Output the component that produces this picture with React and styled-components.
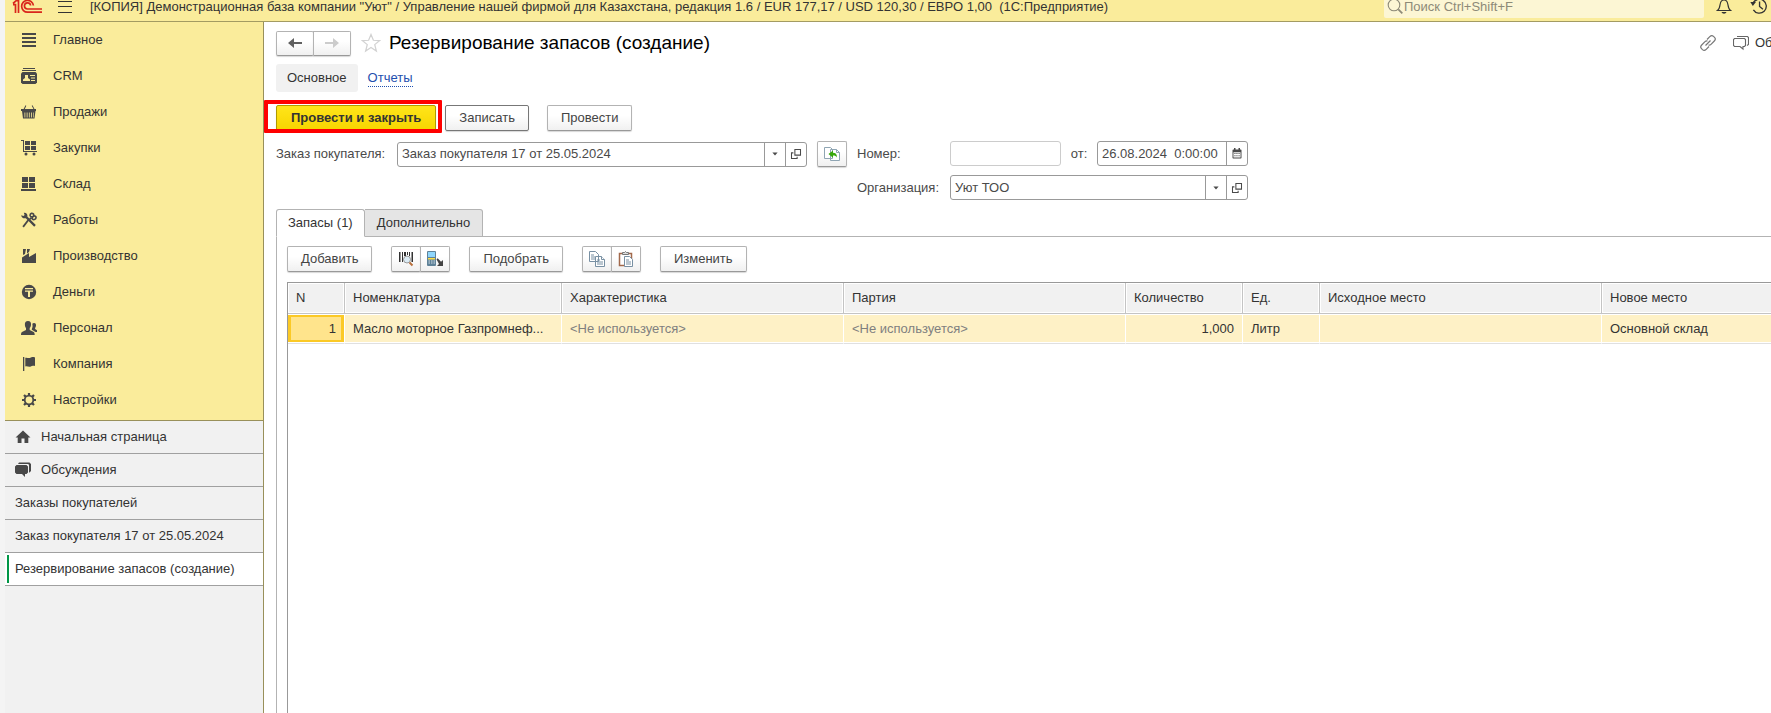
import React from 'react'
import styled, { createGlobalStyle, css } from 'styled-components'

const GlobalStyle = createGlobalStyle`
  * {
    box-sizing: border-box;
  }

  body {
    margin: 0;
    background: #fff;
    color: #333;
    font: 13px/16px "Liberation Sans", Arial, sans-serif;
  }

  button, input {
    font: inherit;
    color: inherit;
  }

  svg {
    display: block;
    flex: none;
  }
`

// icons

const Icon = ({ size = 16, children, ...rest }) => (
  <svg width={size} height={size} viewBox="0 0 16 16" fill="currentColor" aria-hidden="true" {...rest}>
    {children}
  </svg>
)

const LogoIcon = () => (
  <svg width="30" height="14" viewBox="0 0 30 14" fill="none" stroke="#d9261c" strokeWidth="1.7" aria-hidden="true">
    <path d="M1 3.500 4.200.7H6.500V13M1 4.700H3.500V13" />
    <path d="M21.400 5.500A5.900 5.900 0 1 0 15.500 12.200H30" />
    <path d="M18.600 5.500A3.100 3.100 0 1 0 15.500 9H30" />
  </svg>
)

const BurgerIcon = () => (
  <Icon><path d="M1 2h14v1H1zM1 7h14v1H1zM1 13h14v1H1z" /></Icon>
)

const MainIcon = () => (
  <Icon><path d="M1 1h14v2H1zM1 5h14v2H1zM1 9h14v2H1zM1 13h14v2H1z" /></Icon>
)

const CrmIcon = () => (
  <Icon>
    <path d="M2 0h12v1H2zM1 2h14v1H1z" />
    <path d="M1.500 4h13L16 5.500v9L14.500 16h-13L0 14.500v-9z" />
    <path fill="#faec9b" d="M4 7h3v3l2 1.500V13H2v-1.500L4 10zM9 7h5v1H9zM10 9.500h4v1h-4zM10 12h4v1h-4z" />
  </Icon>
)

const BasketIcon = () => (
  <Icon>
    <path d="M4.500 1.200 5.300 1.800 3.800 5H12.500L10.700 1.800 11.500 1.200 13.500 5H15V7H0V5H2.600z" />
    <path fillRule="evenodd" d="M1 7h13.500l-1 7.500h-11.500zM3.500 8.500v5h.8v-5zM5.700 8.500v5h.8v-5zM7.900 8.500v5h.8v-5zM10.100 8.500v5h.8v-5zM12 8.500v5h.6v-5z" />
  </Icon>
)

const CartIcon = () => (
  <Icon>
    <path d="M0 0h3v11h13v1H2V1H0zM4 1h5v4H4zM10 1h5v4h-5zM4 6h5v4H4zM10 6h5v4h-5z" />
    <circle cx="5" cy="14" r="1.500" />
    <circle cx="13" cy="14" r="1.500" />
  </Icon>
)

const StockIcon = () => (
  <Icon><path d="M1 1h6v5H1zM8 1h6v5H8zM1 7h6v5H1zM8 7h6v5H8zM0 13h15v2H0z" /></Icon>
)

const ToolsIcon = () => (
  <Icon>
    <path d="M.2 3.200 2.500 4 3.600 3 2.800.8C5.500.5 7 2.500 6.300 4.600L14.800 13l-1.600 1.700L4.800 6.200C2.500 6.800.3 5.500.2 3.200z" />
    <path d="M8.800 7.600 2.800 15.500 1.400 14.300 7.400 6.500z" />
    <path fill="none" stroke="currentColor" strokeWidth="1.600" d="M8.600 7.600 10 5.800M10.500 1.200c2 0 2.500 1.200 2 2.600-.6 1.400-2.700 1.500-3.200.2-.4-1.200.2-2.400 1.200-2.800zM12.500 4.200c1.500-.6 2.700.1 2.500 1.600-.2 1.300-2 2.400-3.300 1.500-1-.8-.5-2.500.8-3.100z" />
  </Icon>
)

const FactoryIcon = () => (
  <Icon><path d="M2 1h3L4 6 2 7zM6 1h3L8 4 6 5.500zM1 9.500 8 5v4l7-4v10H1z" /></Icon>
)

const MoneyIcon = () => (
  <Icon>
    <circle cx="8" cy="8" r="7.200" />
    <path fill="#faec9b" d="M4 4h8v1.200H4zM4 6.400h8v1.400H9V13H7V7.800H4z" />
  </Icon>
)

const PeopleIcon = () => (
  <Icon>
    <path d="M7 1c2.300 0 3.300 1.500 3 4-.2 1.500-.8 2.500-1.300 3v2l4 2c.8.500 1 1.500 1 3H0c0-1.500.2-2.500 1-3l4-2V8C4.400 7.400 4 6.500 3.900 5 3.700 2.500 4.700 1 7 1z" />
    <path d="M11.300 3.800c.5-.6 1-.8 1.700-.8 1.700 0 2.200 1.200 2 2.800-.1 1-.5 1.700-.9 2.100V9l1.900 1.200V12h-1.500L10.800 9.800V9c.8-1.400 1-3 .5-5.200z" />
  </Icon>
)

const FlagIcon = () => (
  <Icon><path d="M2 1h1.300v14H2zM4.300 1.800c1.700-.6 3 .7 4.700.2C10.500 1.500 11.500.6 14 1.500V10c-2-.6-3 .2-4.700.7-1.800.4-3-.7-5-.2z" /></Icon>
)

const GearIcon = () => (
  <Icon fill="none" stroke="currentColor">
    <circle cx="8" cy="8" r="4.300" strokeWidth="1.800" />
    <path strokeWidth="2.200" d="M8 1v2.500M8 12.500V15M1 8h2.500M12.500 8H15M3 3l1.900 1.900M11.100 11.100 13 13M13 3l-1.900 1.900M4.900 11.100 3 13" />
  </Icon>
)

const HomeIcon = () => (
  <Icon><path d="M8 1.500 15.500 8.500H13.300V14H9.500V9.500h-3V14H2.700V8.500H.5z" /></Icon>
)

const TalkIcon = () => (
  <Icon>
    <path d="M4 .5h10.500L16 2v7l-1.500 1.500H14V2.800L13 2H3z" />
    <path d="M1.500 3H11.500L13 4.500v6L11.500 12H10v3L7 12H1.500L0 10.500v-6z" />
  </Icon>
)

const BellIcon = () => (
  <Icon>
    <path fill="none" stroke="currentColor" strokeWidth="1.200" d="M8 0v1M1.500 11.500c2-1.500 2.200-3 2.600-6C4.500 2.500 5.700 1 8 1s3.500 1.500 3.900 4.500c.4 3 .6 4.500 2.600 6z" />
    <path d="M5.500 13h5c-.5 1.300-1.300 1.700-2.500 1.700S6 14.300 5.500 13z" />
  </Icon>
)

const HistoryIcon = () => (
  <Icon size={18}>
    <path fill="none" stroke="currentColor" strokeWidth="1.200" d="M2.500 5A6.200 6.200 0 1 1 3 10.500M8.500 3v4.500l3 2.500" />
    <path d="M.3 3.500h5L2.500 7z" />
  </Icon>
)

const SearchIcon = () => (
  <Icon fill="none" stroke="currentColor">
    <circle cx="7" cy="6" r="5.800" strokeWidth="1.100" />
    <path strokeWidth="1.800" d="m11.300 10.300 4 4" />
  </Icon>
)

const ArrowIcon = ({ flip }) => (
  <Icon transform={flip ? 'scale(-1 1)' : undefined}>
    <path d="M1 8 7 3v4h8v2H7v4z" />
  </Icon>
)

const StarIcon = () => (
  <Icon size={20} fill="none" stroke="#d2d2d2">
    <path d="m8 1.200 1.900 4.600 4.900.3-3.800 3.200 1.300 5.100L8 11.600l-4.300 2.800L5 9.300 1.200 6.100l4.900-.3z" />
  </Icon>
)

const LinkIcon = () => (
  <Icon fill="none" stroke="#777" strokeWidth="1.200">
    <path d="M7 4.500 9.800 1.700c1.200-1.200 2.700-1.200 3.700-.3l1 1c1 1 .9 2.500-.2 3.600L11 9.300c-.8.8-1.700.9-2.500.7M9 11.500l-2.800 2.800c-1.200 1.200-2.700 1.200-3.700.3l-1-1c-1-1-.9-2.500.2-3.600L5 6.700c.8-.8 1.700-.9 2.500-.7M5.500 10.500l5-5" />
  </Icon>
)

const CommentIcon = () => (
  <Icon fill="none" stroke="#666" strokeWidth="1.100">
    <path d="M4 1.500h10.500l1 1v7l-1.500 1" />
    <path d="M1.500 3.500h10l1 1v6l-1 1H10V14l-3-2.500H1.500l-1-1v-6z" />
  </Icon>
)

const CaretIcon = () => (
  <Icon size={12}><path d="M4.500 6h7L8 10z" /></Icon>
)

const OpenIcon = () => (
  <Icon size={12} fill="none" stroke="currentColor" strokeWidth="1.400">
    <path d="M6.500 2h7.500v7.500H6.500zM4.500 6.500H2V14h7.500v-2.500" />
  </Icon>
)

const CalendarIcon = () => (
  <Icon size={12}>
    <path fillRule="evenodd" d="M3 2h1V0h2v2h4V0h2v2h1a1 1 0 0 1 1 1v10a1 1 0 0 1-1 1H3a1 1 0 0 1-1-1V3a1 1 0 0 1 1-1zm.300 3.500v7.200h9.400V5.500zM4.500 6.500h1.500V8H4.500zM7.200 6.500h1.500V8H7.200zM10 6.500h1.500V8H10zM4.500 9.500h1.500v1.500H4.500zM7.200 9.500h1.500v1.500H7.200zM10 9.500h1.500v1.500H10z" />
  </Icon>
)

const FillIcon = () => (
  <Icon fill="#fff" stroke="#8fa5b3">
    <path d="M.5 1.500h6l2 2v9h-8zM6.500 3.500h6l3 3v8h-9z" />
    <path fill="none" d="M12.500 3.500v3h3" />
    <path fill="#38a80c" stroke="none" d="M4.500 8 9 4.500v2.300c2.500 0 4 1.400 4 4.700-1-1.500-2-2-4-2v2.200z" />
  </Icon>
)

const BarcodeIcon = () => (
  <Icon>
    <path d="M1 1h1.500v10H1zM4 1h1v10H4zM6 1h2v4H6zM9 1h1v3H9zM11 1h1v4h-1zM13.500 1H15v10h-1.500z" />
    <circle cx="9" cy="8.500" r="3.500" fill="#dcecf5" stroke="#999" />
    <path stroke="#b9703c" strokeWidth="2" d="m11.500 11.500 3 3" />
  </Icon>
)

const TerminalIcon = () => (
  <Icon>
    <rect x="0" y="0" width="9" height="15" rx="1" fill="#5f8298" />
    <path fill="#8fd6fb" d="M1 1h7v5H1z" />
    <path fill="#ffdf43" d="M1 7h7v1.500H1z" />
    <path fill="#d3dee5" d="M1.500 9.500H3v1H1.500zM4 9.500h1.500v1H4zM6.500 9.500H8v1H6.500zM1.500 11.500H3v1H1.500zM4 11.500h1.500v1H4zM6.500 11.500H8v1H6.500z" />
    <path fill="#444" d="m9.500 8.200 1.200-1 3.300 3.500L16 9v6h-6l2-2z" />
  </Icon>
)

const CopyIcon = () => (
  <Icon fill="#fff" stroke="#7890a3">
    <path d="M.5.500h6l3 3v7h-9zM6.500 5.500h6l3 3v7h-9z" />
    <path d="M2 4h3M2 6h4M2 8h4M8 9h3M8 11h6M8 13h6M12.500 5.500v3h3" />
  </Icon>
)

const PasteIcon = () => (
  <Icon>
    <path fill="#fff" stroke="#a2694b" strokeWidth="1.500" d="M1.500 2.500h12v12h-12z" />
    <path fill="#ddd" stroke="#777" d="M4.500 1.500h2l1-1 1 1h2v2h-6z" />
    <path fill="#fff" stroke="#7890a3" d="M6.500 5.500h5l3 3v7h-8zM8 9h3M8 11h5M8 13h5" />
  </Icon>
)

// data

const sections = [
  ['Главное', MainIcon],
  ['CRM', CrmIcon],
  ['Продажи', BasketIcon],
  ['Закупки', CartIcon],
  ['Склад', StockIcon],
  ['Работы', ToolsIcon],
  ['Производство', FactoryIcon],
  ['Деньги', MoneyIcon],
  ['Персонал', PeopleIcon],
  ['Компания', FlagIcon],
  ['Настройки', GearIcon],
]

const windows = [
  { title: 'Начальная страница', icon: HomeIcon },
  { title: 'Обсуждения', icon: TalkIcon },
  { title: 'Заказы покупателей' },
  { title: 'Заказ покупателя 17 от 25.05.2024' },
  { title: 'Резервирование запасов (создание)', active: true },
]

const columns = [
  { title: 'N', width: 57, value: '1', right: true, current: true },
  { title: 'Номенклатура', width: 217, value: 'Масло моторное Газпромнеф...' },
  { title: 'Характеристика', width: 282, value: '<Не используется>', muted: true },
  { title: 'Партия', width: 282, value: '<Не используется>', muted: true },
  { title: 'Количество', width: 117, value: '1,000', right: true },
  { title: 'Ед.', width: 77, value: 'Литр' },
  { title: 'Исходное место', width: 282, value: '' },
  { title: 'Новое место', width: 282, value: 'Основной склад' },
]

const App = () => {
  return (
    <>
      <GlobalStyle />
      <Page>
        <Header>
          <HeaderBar>
            <LogoIcon />
            <PlainButton aria-label="Меню"><BurgerIcon /></PlainButton>
            <AppTitle>
              [КОПИЯ] Демонстрационная база компании "Уют" / Управление нашей фирмой для Казахстана, редакция 1.6 / EUR 177,17 / USD 120,30 / ЕВРО 1,00&nbsp; (1С:Предприятие)
            </AppTitle>
            <Search>
              <SearchIcon />
              <input type="search" aria-label="Поиск" placeholder="Поиск Ctrl+Shift+F" />
            </Search>
            <HeaderActions>
              <PlainButton aria-label="Уведомления"><BellIcon /></PlainButton>
              <PlainButton aria-label="История"><HistoryIcon /></PlainButton>
            </HeaderActions>
          </HeaderBar>
        </Header>

        <Body>
          <Sidebar>
            <SectionList>
              {sections.map(([title, SectionIcon]) => (
                <SectionLink href="#" key={title}>
                  <SectionIcon />
                  {title}
                </SectionLink>
              ))}
            </SectionList>
            {windows.map(({ title, icon: WindowIcon, active }) => (
              <WindowLink href="#" key={title} $active={active}>
                {WindowIcon && <WindowIcon />}
                {title}
              </WindowLink>
            ))}
          </Sidebar>

          <Main>
            <TitleRow>
              <ButtonGroup>
                <IconButton $nav aria-label="Назад"><ArrowIcon /></IconButton>
                <IconButton $nav aria-label="Вперед" disabled><ArrowIcon flip /></IconButton>
              </ButtonGroup>
              <PlainButton aria-label="В избранное"><StarIcon /></PlainButton>
              <h1>Резервирование запасов (создание)</h1>
              <TitleActions>
                <PlainButton aria-label="Ссылка"><LinkIcon /></PlainButton>
                <DiscussButton>
                  <CommentIcon />
                  <span>Обсуждение</span>
                </DiscussButton>
              </TitleActions>
            </TitleRow>

            <SubNav>
              <CurrentView>Основное</CurrentView>
              <a href="#">Отчеты</a>
            </SubNav>

            <Commands>
              <Highlight>
                <Button $primary>Провести и закрыть</Button>
              </Highlight>
              <Button $strong>Записать</Button>
              <Button $apart>Провести</Button>
            </Commands>

            <Form>
              <OrderField>
                <label htmlFor="order">Заказ покупателя:</label>
                <Combo>
                  <input id="order" defaultValue="Заказ покупателя 17 от 25.05.2024" />
                  <button aria-label="Выбрать заказ"><CaretIcon /></button>
                  <button aria-label="Открыть заказ"><OpenIcon /></button>
                </Combo>
                <IconButton aria-label="Заполнить по заказу"><FillIcon /></IconButton>
              </OrderField>
              <Details>
                <label htmlFor="number">Номер:</label>
                <NumberRow>
                  <NumberInput id="number" />
                  <label htmlFor="date">от:</label>
                  <Combo>
                    <input id="date" defaultValue={'26.08.2024\u00a0 0:00:00'} />
                    <button aria-label="Календарь"><CalendarIcon /></button>
                  </Combo>
                </NumberRow>
                <label htmlFor="organization">Организация:</label>
                <Combo>
                  <input id="organization" defaultValue="Уют ТОО" />
                  <button aria-label="Выбрать организацию"><CaretIcon /></button>
                  <button aria-label="Открыть организацию"><OpenIcon /></button>
                </Combo>
              </Details>
            </Form>

            <Tabs role="tablist">
              <Tab role="tab" aria-selected="true" $active>Запасы (1)</Tab>
              <Tab role="tab" aria-selected="false">Дополнительно</Tab>
            </Tabs>

            <Pane>
              <Toolbar>
                <Button>Добавить</Button>
                <ButtonGroup>
                  <IconButton aria-label="Поиск по штрихкоду"><BarcodeIcon /></IconButton>
                  <IconButton aria-label="Загрузить из терминала"><TerminalIcon /></IconButton>
                </ButtonGroup>
                <Button>Подобрать</Button>
                <ButtonGroup>
                  <IconButton aria-label="Копировать"><CopyIcon /></IconButton>
                  <IconButton aria-label="Вставить"><PasteIcon /></IconButton>
                </ButtonGroup>
                <Button>Изменить</Button>
              </Toolbar>
              <TableBox>
                <Table>
                  <colgroup>
                    {columns.map(({ title, width }) => (
                      <col key={title} style={{ width }} />
                    ))}
                  </colgroup>
                  <thead>
                    <tr>
                      {columns.map(({ title }) => <HeadCell key={title}>{title}</HeadCell>)}
                    </tr>
                  </thead>
                  <tbody>
                    <tr>
                      {columns.map(({ title, value, right, muted, current }) => (
                        <Cell key={title} $right={right} $muted={muted} $current={current}>{value}</Cell>
                      ))}
                    </tr>
                  </tbody>
                </Table>
              </TableBox>
            </Pane>
          </Main>
        </Body>
      </Page>
    </>
  )
}

const Page = styled.div`
  display: flex;
  flex-direction: column;
  min-height: 100vh;
  overflow: hidden;
  border-left: 5px solid #f4f4f4;
`

const Header = styled.header`
  display: flex;
  align-items: flex-end;
  height: 22px;
  overflow: hidden;
  background: #faec9b;
  border-bottom: 1px solid #a39b62;
`

const HeaderBar = styled.div`
  display: flex;
  align-items: center;
  flex: 1;
  min-width: 0;
  height: 28px;
  padding: 0 3px 0 7px;

  > button {
    margin: 0 17px 0 15px;
  }
`

const PlainButton = styled.button`
  display: flex;
  align-items: center;
  padding: 0;
  border: 0;
  background: none;
`

const AppTitle = styled.div`
  white-space: nowrap;
  line-height: 14px;
`

const Search = styled.label`
  display: flex;
  align-items: center;
  gap: 1px;
  width: 320px;
  height: 22px;
  margin-left: auto;
  padding: 0 3px;
  border-radius: 2px;
  background: #fcf6d4;
  color: #8d8a78;

  input {
    flex: 1;
    min-width: 0;
    height: 18px;
    padding: 0 0 2px;
    border: 0;
    outline: 0;
    background: none;
  }

  input::placeholder {
    color: #8d8a78;
  }
`

const HeaderActions = styled.div`
  display: flex;
  align-items: center;
  gap: 18px;
  margin-left: 12px;
`

const Body = styled.div`
  display: flex;
  flex: 1;
`

const Sidebar = styled.nav`
  flex: none;
  width: 259px;
  background: #f1f1f1;
  border-right: 1px solid #99905a;

  a {
    display: flex;
    align-items: center;
    color: #333;
    text-decoration: none;
    white-space: nowrap;
  }

  svg {
    color: #484848;
  }
`

const SectionList = styled.div`
  padding-bottom: 2px;
  background: #faec9b;
  border-bottom: 1px solid #99905a;
`

const SectionLink = styled.a`
  gap: 16px;
  height: 36px;
  padding-left: 16px;
`

const WindowLink = styled.a`
  gap: 10px;
  height: 33px;
  padding-left: 10px;
  border-bottom: 1px solid #a0a0a0;

  ${({ $active }) => $active && css`
    gap: 6px;
    padding-left: 2px;
    background: #fff;

    &::before {
      content: "";
      width: 2px;
      height: 28px;
      background: #009646;
    }
  `}
`

const Main = styled.main`
  flex: 1;
  display: flex;
  flex-direction: column;
  min-width: 0;
  padding: 9px 0 0 12px;
`

const TitleRow = styled.div`
  display: flex;
  align-items: center;
  height: 24px;

  > button {
    margin: 0 8px 0 10px;
  }

  h1 {
    margin: 0;
    color: #000;
    font-size: 19px;
    line-height: 24px;
    font-weight: 400;
    white-space: nowrap;
  }
`

const TitleActions = styled.div`
  display: flex;
  gap: 17px;
  margin-left: auto;
`

const DiscussButton = styled(PlainButton)`
  gap: 6px;

  span {
    width: 16px;
    overflow: hidden;
    white-space: nowrap;
  }
`

const SubNav = styled.div`
  display: flex;
  align-items: center;
  gap: 10px;
  margin-top: 9px;

  a {
    color: #1f4fae;
    border-bottom: 1px dotted #1f4fae;
    text-decoration: none;
  }
`

const CurrentView = styled.span`
  padding: 6px 11px;
  border-radius: 3px;
  background: #f1f1f1;
`

const buttonFace = css`
  height: 26px;
  border: 1px solid #b3b3b3;
  border-bottom-color: #999;
  border-radius: 2px;
  background: linear-gradient(#fff 40%, #f0f0f0);
  box-shadow: 0 1px 1px #d8d8d8;
`

const Button = styled.button`
  ${buttonFace}
  padding: 0 13px;
  color: #444;
  white-space: nowrap;

  ${({ $strong }) => $strong && css`
    border-color: #777;
  `}

  ${({ $apart }) => $apart && css`
    margin-left: 9px;
  `}

  ${({ $primary }) => $primary && css`
    padding: 0 14px;
    border-color: #b09a00;
    background: linear-gradient(#ffe51a, #f7d500);
    color: #333;
    font-weight: 700;
  `}
`

const IconButton = styled.button`
  ${buttonFace}
  display: flex;
  align-items: center;
  justify-content: center;
  width: 30px;
  padding: 0;

  ${({ $nav }) => $nav && css`
    width: 38px;
    height: 25px;
    color: #606060;

    &:disabled {
      color: #ccc;
    }
  `}
`

const ButtonGroup = styled.div`
  display: flex;

  > button + button {
    margin-left: -1px;
    border-top-left-radius: 0;
    border-bottom-left-radius: 0;
  }
`

const Commands = styled.div`
  display: flex;
  gap: 9px;
  margin-top: 13px;
`

const Highlight = styled.div`
  position: relative;
  display: flex;

  &::after {
    content: "";
    position: absolute;
    inset: -5px -6px -2px -12px;
    border: 4px solid #f00;
    border-radius: 1px;
    pointer-events: none;
  }
`

const Form = styled.div`
  display: flex;
  align-items: flex-start;
  gap: 10px;
  margin-top: 10px;
  color: #4a4a4a;
`

const OrderField = styled.div`
  display: flex;
  align-items: center;
  gap: 10px;
  white-space: nowrap;

  > label {
    min-width: 111px;
  }

  > div {
    width: 410px;
  }
`

const Details = styled.div`
  display: grid;
  grid-template-columns: 93px 298px;
  row-gap: 9px;
  align-items: center;
`

const NumberRow = styled.div`
  display: flex;
  align-items: center;
  justify-content: space-between;

  > div {
    width: 151px;
  }
`

const NumberInput = styled.input`
  width: 111px;
  height: 25px;
  border: 1px solid #ccc;
  border-radius: 3px;
`

const Combo = styled.div`
  display: flex;
  height: 25px;
  border: 1px solid #999;
  border-radius: 3px;
  background: #fff;

  input {
    flex: 1;
    min-width: 0;
    padding: 0 4px;
    border: 0;
    background: none;
    outline: 0;
  }

  button {
    display: flex;
    align-items: center;
    justify-content: center;
    width: 21px;
    padding: 0;
    border: 0;
    border-left: 1px solid #999;
    background: none;
  }
`

const Tabs = styled.div`
  display: flex;
  margin-top: 9px;

  &::after {
    content: "";
    flex: 1;
    border-bottom: 1px solid #b3b3b3;
  }
`

const Tab = styled.button`
  height: 28px;
  padding: 0 12px;
  border: 1px solid #b3b3b3;
  border-left-width: 0;
  border-radius: 0 3px 0 0;
  background: #e5e5e5;

  ${({ $active }) => $active && css`
    padding: 0 11px;
    border-left-width: 1px;
    border-bottom-color: transparent;
    border-radius: 3px 3px 0 0;
    background: #fff;
  `}
`

const Pane = styled.section`
  flex: 1;
  display: flex;
  flex-direction: column;
  padding: 9px 0 0 10px;
  border-left: 1px solid #b3b3b3;
`

const Toolbar = styled.div`
  display: flex;
  gap: 19px;
`

const TableBox = styled.div`
  flex: 1;
  margin-top: 10px;
  overflow: hidden;
  border: solid #999;
  border-width: 1px 0 0 1px;
`

const Table = styled.table`
  width: 1596px;
  table-layout: fixed;
  border-collapse: separate;
  border-spacing: 0;
`

const cellText = css`
  overflow: hidden;
  padding: 0 8px;
  font-weight: 400;
  text-overflow: ellipsis;
  white-space: nowrap;
`

const HeadCell = styled.th`
  ${cellText}
  height: 31px;
  border-right: 1px solid #c4c4c4;
  border-bottom: 1px solid #c4c4c4;
  background: #f1f1f1;
  box-shadow: inset 0 0 0 1px #fff;
  text-align: left;
`

const Cell = styled.td`
  ${cellText}
  height: 30px;
  border-right: 1px solid #fff;
  border-bottom: 1px solid #e0e0e0;
  background: #fef1c6;
  box-shadow: inset 0 1px #fff, inset 0 -1px #fff;
  text-align: ${({ $right }) => ($right ? 'right' : 'left')};
  color: ${({ $muted }) => ($muted ? '#808080' : '#333')};

  ${({ $current }) => $current && css`
    background: #ffe48c;
    box-shadow: inset 0 1px #fff, inset 0 -1px #fff, inset 0 0 0 3px #fbc926;
  `}
`

export default App
